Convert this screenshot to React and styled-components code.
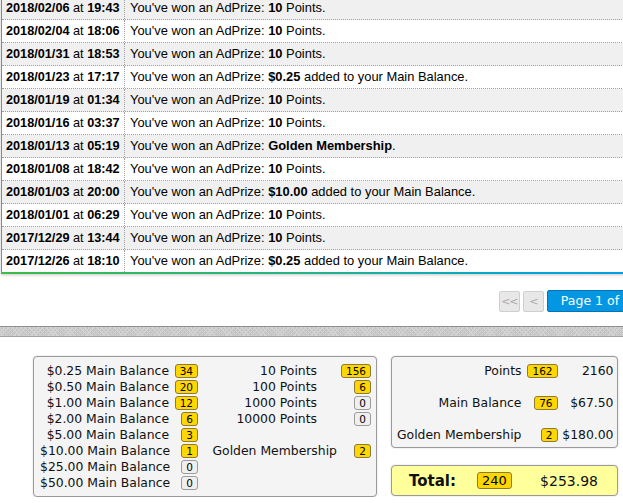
import React from 'react';
import styled, { createGlobalStyle } from 'styled-components';

const GlobalStyle = createGlobalStyle`
  html, body {
    margin: 0;
    padding: 0;
    background: #fff;
    overflow: hidden;
  }
  body {
    font-family: "Liberation Sans", Arial, sans-serif;
    color: #000;
  }
`;

const Page = styled.div`
  width: 700px;
`;

const History = styled.div`
  margin: -3px 0 0 1px;
  border-left: 1px solid #d2d2d2;
  border-bottom: 2px solid;
  border-image: linear-gradient(to right, #3dbb45, #22b38a 45%, #00a6d6 75%, #009be6) 1;
  box-shadow: 0 1px 3px rgba(0, 0, 0, 0.22);
`;

const Row = styled.div`
  display: grid;
  grid-template-columns: 123px 1fr;
  height: 22px;
  background: ${(p) => (p.$shaded ? '#f0f0f0' : '#fff')};
  border-bottom: ${(p) => (p.$last ? 'none' : '1px dotted #a0a0a0')};
  font-size: 12.7px;
  line-height: 22px;
  white-space: nowrap;
`;

const DateCell = styled.div`
  padding-left: 4px;
  border-right: 1px dotted #a0a0a0;
`;

const MessageCell = styled.div`
  padding-left: 5px;
  font-size: 12.9px;
`;

const Pager = styled.div`
  display: flex;
  justify-content: flex-end;
  align-items: flex-end;
  gap: 3px;
  margin-top: 16px;
  padding-right: 7px;
  font-family: "DejaVu Sans", Verdana, sans-serif;
`;

const PageButton = styled.button`
  box-sizing: border-box;
  height: ${(p) => (p.$active ? '22px' : '21px')};
  width: ${(p) => (p.$active ? 'auto' : '21px')};
  padding: ${(p) => (p.$active ? '0 13px' : '0')};
  border: 1px solid ${(p) => (p.$active ? '#0a72b4' : '#cfcfcf')};
  border-radius: 2px;
  background: ${(p) => (p.$active ? '#0397e3' : '#e8e8e8')};
  color: ${(p) => (p.$active ? '#fff' : '#a8a8a8')};
  font-family: inherit;
  font-size: ${(p) => (p.$active ? '12.5px' : '11px')};
  line-height: 1;
  letter-spacing: ${(p) => (p.$active ? '0' : '-1px')};
`;

const Band = styled.div`
  margin-top: 14px;
  height: 9px;
  border-top: 1px solid #8f8f8f;
  border-bottom: 1px solid #a2a2a2;
  background-color: #c3c3c3;
  background-image:
    repeating-linear-gradient(45deg, transparent 0 2px, #d3d3d3 2px 3px),
    repeating-linear-gradient(-45deg, transparent 0 2px, #d3d3d3 2px 3px);
`;

const Summary = styled.div`
  display: flex;
  align-items: flex-start;
  gap: 14px;
  padding: 19px 0 0 33px;
  font-family: "DejaVu Sans", Verdana, sans-serif;
  font-size: 12.4px;
  color: #111;
`;

const Panel = styled.div`
  box-sizing: border-box;
  border: 1px solid #9a9a9a;
  border-radius: 4px;
  background: ${(p) => (p.$total ? '#ffff9c' : '#f4f4f4')};
  box-shadow: 0 0 2px rgba(0, 0, 0, 0.18);
`;

const CountGrid = styled(Panel)`
  display: grid;
  grid-template-columns: 129px 29px 139px 34px;
  grid-auto-rows: 16px;
  align-items: center;
  width: 344px;
  padding: 5px 5px 6px 6px;
`;

const SideColumn = styled.div`
  display: flex;
  flex-direction: column;
  gap: 17px;
  width: 227px;
`;

const ValueGrid = styled(Panel)`
  display: grid;
  grid-template-columns: 1fr 36px 56px;
  grid-auto-rows: 16px;
  row-gap: 16px;
  align-items: center;
  padding: 5px 5px 5px 5px;
`;

const TotalBar = styled(Panel)`
  display: grid;
  grid-template-columns: 68px 34px 1fr;
  align-items: center;
  height: 31px;
  padding: 0 19px 0 17px;
`;

const Label = styled.div`
  text-align: right;
  white-space: nowrap;
  padding-right: ${(p) => p.$inset || 0}px;
`;

const Cell = styled.div`
  text-align: right;
  white-space: nowrap;
`;

const TotalLabel = styled.div`
  font-weight: bold;
  font-size: 15px;
`;

const Amount = styled.div`
  text-align: right;
  font-size: ${(p) => (p.$big ? '14px' : 'inherit')};
`;

const Badge = styled.span`
  display: inline-block;
  box-sizing: border-box;
  height: ${(p) => (p.$big ? '17px' : '14px')};
  padding: 0 4px;
  border: 1px solid ${(p) => (p.$empty ? '#9c9c9c' : '#8c7a3a')};
  border-radius: 3px;
  background: ${(p) => (p.$empty ? '#efefef' : '#ffd700')};
  color: #000;
  font-size: ${(p) => (p.$big ? '13px' : '10.5px')};
  line-height: ${(p) => (p.$big ? '15px' : '12px')};
  vertical-align: middle;
`;

const prizes = [
  ['2018/02/06', '19:43', 'points'],
  ['2018/02/04', '18:06', 'points'],
  ['2018/01/31', '18:53', 'points'],
  ['2018/01/23', '17:17', '$0.25'],
  ['2018/01/19', '01:34', 'points'],
  ['2018/01/16', '03:37', 'points'],
  ['2018/01/13', '05:19', 'golden'],
  ['2018/01/08', '18:42', 'points'],
  ['2018/01/03', '20:00', '$10.00'],
  ['2018/01/01', '06:29', 'points'],
  ['2017/12/29', '13:44', 'points'],
  ['2017/12/26', '18:10', '$0.25'],
];

const balanceCounts = [
  ['$0.25', 34],
  ['$0.50', 20],
  ['$1.00', 12],
  ['$2.00', 6],
  ['$5.00', 3],
  ['$10.00', 1],
  ['$25.00', 0],
  ['$50.00', 0],
];

const otherCounts = [
  ['10 Points', 156, 20],
  ['100 Points', 6, 20],
  ['1000 Points', 0, 20],
  ['10000 Points', 0, 20],
  null,
  ['Golden Membership', 2, 0],
  null,
  null,
];

const totals = [
  ['Points', 162, '2160'],
  ['Main Balance', 76, '$67.50'],
  ['Golden Membership', 2, '$180.00'],
];

const Prize = ({ kind }) => {
  if (kind === 'points') return <><b>10</b> Points.</>;
  if (kind === 'golden') return <><b>Golden Membership</b>.</>;
  return <><b>{kind}</b> added to your Main Balance.</>;
};

const App = () => (
  <Page>
    <GlobalStyle />
    <History>
      {prizes.map(([day, time, kind], i) => (
        <Row key={day + time} $shaded={i % 2 === 0} $last={i === prizes.length - 1}>
          <DateCell>
            <b>{day}</b> at <b>{time}</b>
          </DateCell>
          <MessageCell>
            You've won an AdPrize: <Prize kind={kind} />
          </MessageCell>
        </Row>
      ))}
    </History>

    <Pager>
      <PageButton>&lt;&lt;</PageButton>
      <PageButton>&lt;</PageButton>
      <PageButton $active>Page 1 of 6</PageButton>
      <PageButton>&gt;</PageButton>
      <PageButton>&gt;&gt;</PageButton>
    </Pager>

    <Band />

    <Summary>
      <CountGrid>
        {balanceCounts.map(([amount, count], i) => {
          const other = otherCounts[i];
          return (
            <React.Fragment key={amount}>
              <Label>{amount} Main Balance</Label>
              <Cell>
                <Badge $empty={count === 0}>{count}</Badge>
              </Cell>
              <Label $inset={other ? other[2] : 0}>{other ? other[0] : ''}</Label>
              <Cell>{other && <Badge $empty={other[1] === 0}>{other[1]}</Badge>}</Cell>
            </React.Fragment>
          );
        })}
      </CountGrid>

      <SideColumn>
        <ValueGrid>
          {totals.map(([name, count, value]) => (
            <React.Fragment key={name}>
              <Label>{name}</Label>
              <Cell>
                <Badge>{count}</Badge>
              </Cell>
              <Amount>{value}</Amount>
            </React.Fragment>
          ))}
        </ValueGrid>
        <TotalBar $total>
          <TotalLabel>Total:</TotalLabel>
          <div>
            <Badge $big>240</Badge>
          </div>
          <Amount $big>$253.98</Amount>
        </TotalBar>
      </SideColumn>
    </Summary>
  </Page>
);

export default App;
